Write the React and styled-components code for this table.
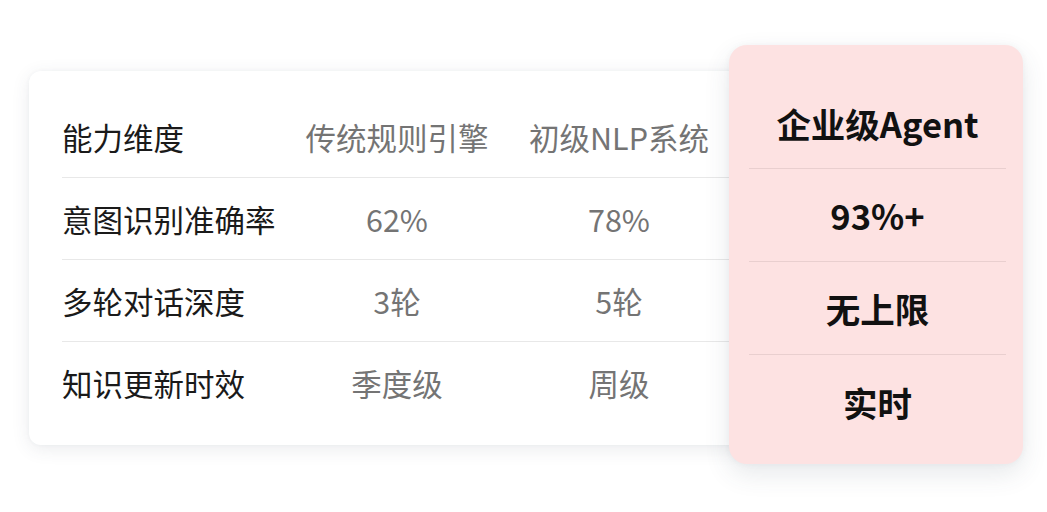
import React from 'react'
import styled, { createGlobalStyle } from 'styled-components'

const GlobalStyle = createGlobalStyle`
  html, body {
    margin: 0;
    padding: 0;
    background: #ffffff;
  }
  body {
    font-family: "Noto Sans CJK SC", "Noto Sans", sans-serif;
  }
`

const rows = [
  { label: '意图识别准确率', rule: '62%', nlp: '78%', agent: '93%+' },
  { label: '多轮对话深度', rule: '3轮', nlp: '5轮', agent: '无上限' },
  { label: '知识更新时效', rule: '季度级', nlp: '周级', agent: '实时' },
]

function App() {
  return (
    <>
      <GlobalStyle />
      <Page>
        <TableCard>
          <Row>
            <LabelCell>能力维度</LabelCell>
            <ValueCell>传统规则引擎</ValueCell>
            <ValueCell>初级NLP系统</ValueCell>
          </Row>
          {rows.map((r, i) => (
            <Row key={r.label} $last={i === rows.length - 1}>
              <LabelCell>{r.label}</LabelCell>
              <ValueCell>{r.rule}</ValueCell>
              <ValueCell>{r.nlp}</ValueCell>
            </Row>
          ))}
        </TableCard>

        <AgentCard>
          <AgentRow $first>企业级Agent</AgentRow>
          {rows.map((r, i) => (
            <AgentRow key={r.agent} $last={i === rows.length - 1}>
              {r.agent}
            </AgentRow>
          ))}
        </AgentCard>
      </Page>
    </>
  )
}

const Page = styled.div`
  display: flex;
  align-items: flex-start;
  padding: 45px 0 0 29px;
  width: 1047px;
  height: 512px;
  box-sizing: border-box;
`

const TableCard = styled.div`
  margin-top: 26px;
  width: 731px;
  margin-right: -31px;
  padding: 25px 0 22px 33px;
  box-sizing: border-box;
  background: #ffffff;
  border-radius: 12px;
  box-shadow: 0 4px 18px rgba(60, 70, 90, 0.10), 0 0 4px rgba(60, 70, 90, 0.04);
`

const Row = styled.div`
  display: grid;
  grid-template-columns: 222px 226px 218px 1fr;
  align-items: center;
  height: 81px;
  border-bottom: ${p => (p.$last ? 'none' : '1px solid #e8e8e8')};
`

const LabelCell = styled.div`
  font-size: 30.5px;
  color: #1a1a1a;
  white-space: nowrap;
`

const ValueCell = styled.div`
  font-size: 30.5px;
  color: #747474;
  text-align: center;
  white-space: nowrap;
`

const AgentCard = styled.div`
  position: relative;
  z-index: 1;
  width: 294px;
  height: 419px;
  padding: 31px 17px 15px 20px;
  box-sizing: border-box;
  background: #fde2e2;
  border-radius: 18px;
  box-shadow: 0 10px 26px rgba(60, 70, 90, 0.12), 0 0 6px rgba(60, 70, 90, 0.05);
  display: flex;
  flex-direction: column;
`

const AgentRow = styled.div`
  height: 93px;
  display: flex;
  align-items: center;
  justify-content: center;
  padding-top: ${p => (p.$first ? '2px' : '0')};
  box-sizing: border-box;
  font-size: 34.5px;
  font-weight: 700;
  color: #111111;
  white-space: nowrap;
  border-bottom: ${p => (p.$last ? 'none' : '1px solid #e9cfcf')};
`

export default App
